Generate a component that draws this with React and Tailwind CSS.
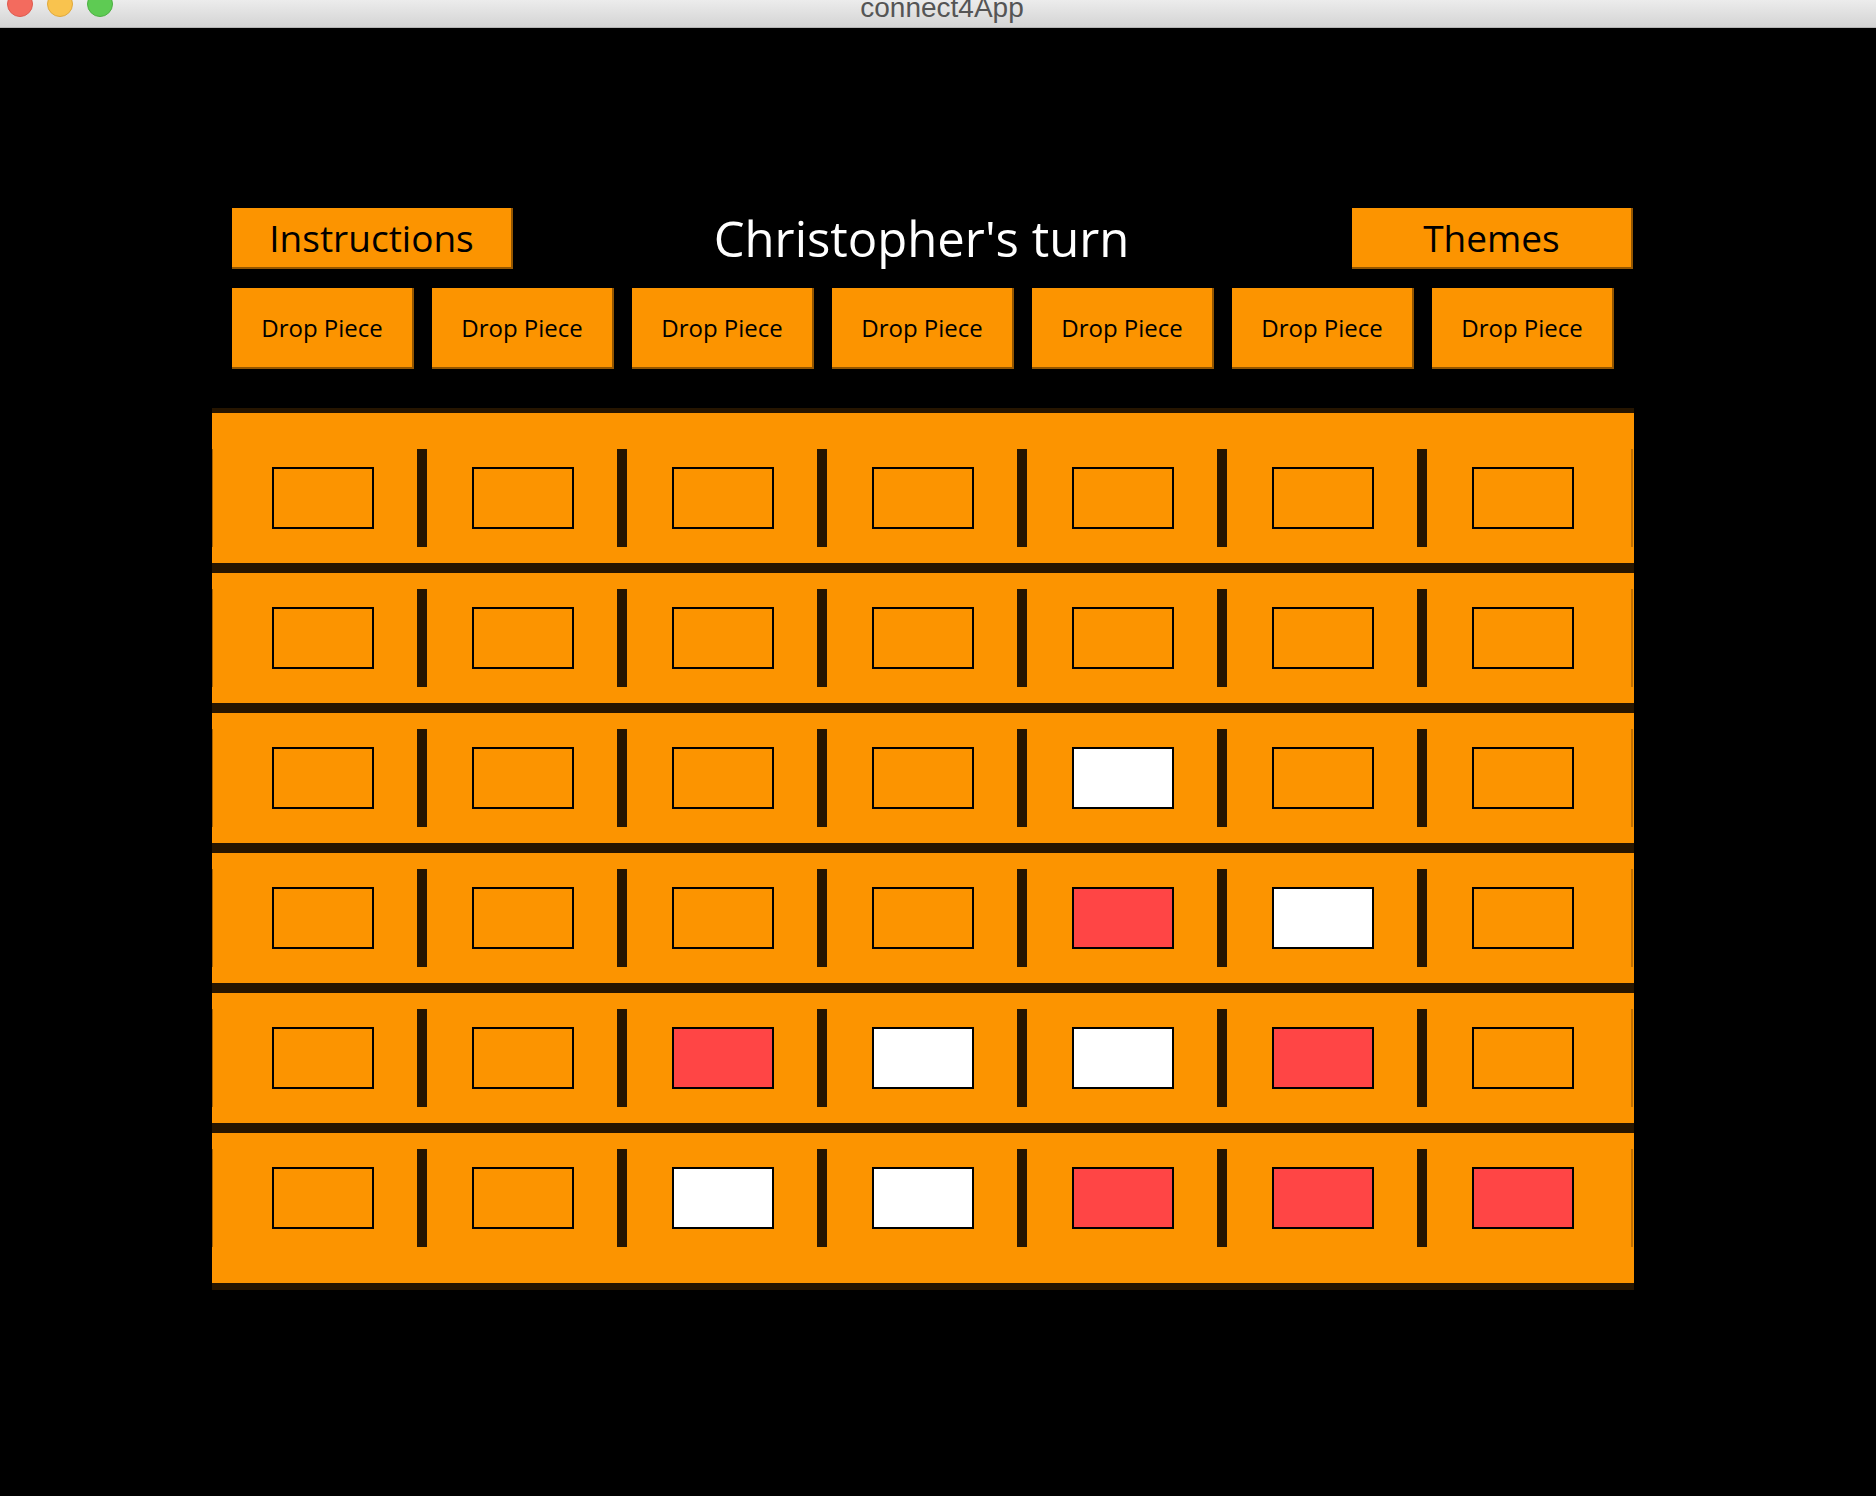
import React from "react";

const board = [
  ["", "", "", "", "", "", ""],
  ["", "", "", "", "", "", ""],
  ["", "", "", "", "w", "", ""],
  ["", "", "", "", "r", "w", ""],
  ["", "", "r", "w", "w", "r", ""],
  ["", "", "w", "w", "r", "r", "r"],
];

const Cell = ({ v }) => {
  const bg = v === "r" ? "bg-[#ff4545]" : v === "w" ? "bg-white" : "bg-[#fc9400]";
  return <div className={`w-[102px] h-[62px] border-2 border-black shrink-0 ${bg}`} />;
};

const Row = ({ cells }) => (
  <div className="h-[130px] flex items-center">
    <div className="w-px h-[98px] bg-[#a86200] shrink-0" />
    <div className="w-[59px] shrink-0" />
    {cells.map((v, i) => (
      <React.Fragment key={i}>
        <Cell v={v} />
        {i < 6 && (
          <>
            <div className="w-[43px] shrink-0" />
            <div className="w-[10px] h-[98px] bg-[#261500] shrink-0" />
            <div className="w-[45px] shrink-0" />
          </>
        )}
      </React.Fragment>
    ))}
    <div className="w-[57px] shrink-0" />
    <div className="w-[2px] h-[98px] bg-[#c27000] shrink-0" />
  </div>
);

export default function App() {
  return (
    <div className="w-[1876px] h-[1496px] bg-black overflow-hidden" style={{ fontFamily: "'Open Sans', sans-serif" }}>
      {/* title bar */}
      <div className="relative h-[28px] bg-gradient-to-b from-[#ececec] to-[#d4d4d4] border-b border-[#b5b5b5] overflow-hidden flex justify-center">
        <div className="absolute left-[7px] -top-[9px] flex gap-[14px]">
          <div className="w-[26px] h-[26px] rounded-full bg-[#f36b5e] border border-[#de5a4e]" />
          <div className="w-[26px] h-[26px] rounded-full bg-[#f9c34e] border border-[#e0a93b]" />
          <div className="w-[26px] h-[26px] rounded-full bg-[#5ecb53] border border-[#4cb042]" />
        </div>
        <span
          className="text-[28px] leading-[28px] text-[#555] -mt-[6px] ml-[8px]"
          style={{ fontFamily: "'Liberation Sans', Arial, sans-serif" }}
        >
          connect4App
        </span>
      </div>

      <div className="ml-[212px] w-[1422px]">
        {/* header */}
        <div className="mt-[180px] ml-[20px] w-[1401px] flex items-center">
          <button className="w-[281px] h-[61px] bg-[#fc9400] border-r-2 border-b-2 border-[#945600] flex items-center justify-center text-[37px] leading-none text-black">
            Instructions
          </button>
          <div className="flex-1 text-center text-white text-[49px] leading-none pr-[22px]">
            Christopher's turn
          </div>
          <button className="w-[281px] h-[61px] bg-[#fc9400] border-r-2 border-b-2 border-[#945600] flex items-center justify-center text-[37px] leading-none text-black">
            Themes
          </button>
        </div>

        {/* drop buttons */}
        <div className="mt-[19px] ml-[20px] flex gap-[18px]">
          {Array.from({ length: 7 }).map((_, i) => (
            <button
              key={i}
              className="w-[182px] h-[81px] bg-[#fc9400] border-r-2 border-b-2 border-[#945600] flex items-center justify-center text-[24px] leading-none text-black"
            >
              Drop Piece
            </button>
          ))}
        </div>

        {/* board */}
        <div className="mt-[39px] bg-[#fc9400] border-t-[5px] border-b-[7px] border-[#261500] py-[20px]">
          {board.map((r, i) => (
            <React.Fragment key={i}>
              {i > 0 && <div className="h-[10px] bg-[#261500]" />}
              <Row cells={r} />
            </React.Fragment>
          ))}
        </div>
      </div>
    </div>
  );
}
